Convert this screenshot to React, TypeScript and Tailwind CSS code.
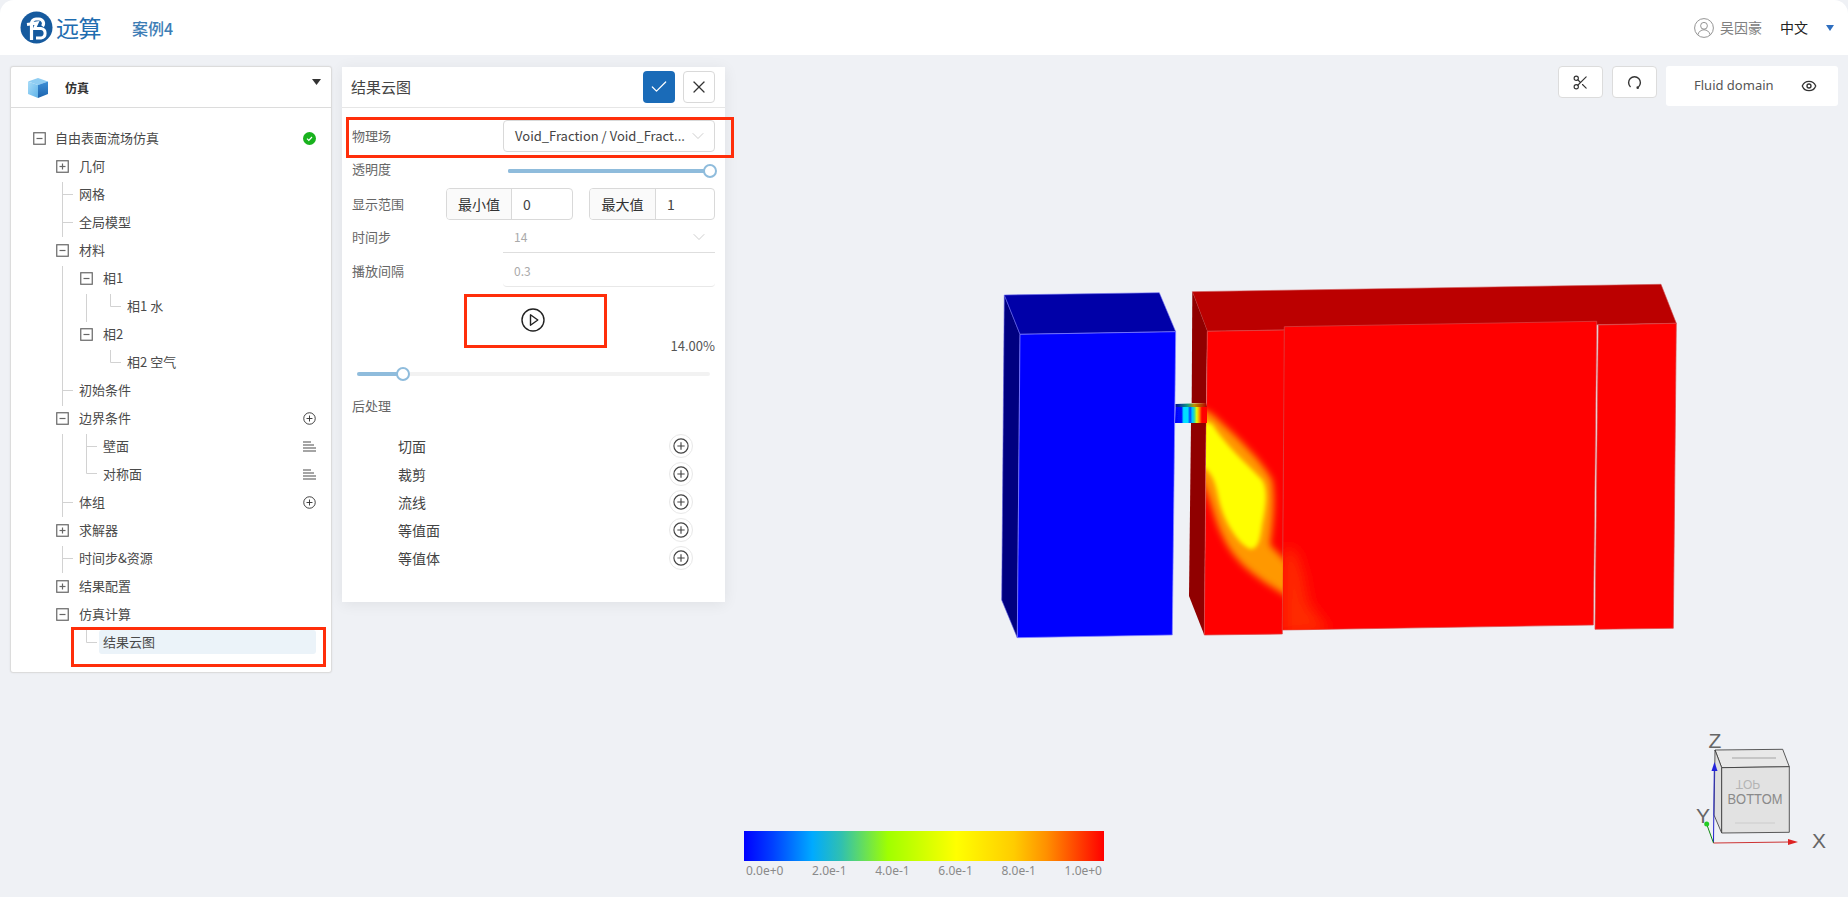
import React from "react";
import { Check, X, ChevronDown, Scissors, Eye } from "lucide-react";

const cjk = { fontFamily: '"Noto Sans CJK SC", "Noto Sans", sans-serif' };

type Row = { label: string; x: number; box?: "plus" | "minus"; right?: "add" | "list" | "ok"; selected?: boolean };

const rows: Row[] = [
  { label: "自由表面流场仿真", x: 46, box: "minus", right: "ok" },
  { label: "几何", x: 69, box: "plus" },
  { label: "网格", x: 69 },
  { label: "全局模型", x: 69 },
  { label: "材料", x: 69, box: "minus" },
  { label: "相1", x: 93, box: "minus" },
  { label: "相1 水", x: 117 },
  { label: "相2", x: 93, box: "minus" },
  { label: "相2 空气", x: 117 },
  { label: "初始条件", x: 69 },
  { label: "边界条件", x: 69, box: "minus", right: "add" },
  { label: "壁面", x: 93, right: "list" },
  { label: "对称面", x: 93, right: "list" },
  { label: "体组", x: 69, right: "add" },
  { label: "求解器", x: 69, box: "plus" },
  { label: "时间步&资源", x: 69 },
  { label: "结果配置", x: 69, box: "plus" },
  { label: "仿真计算", x: 69, box: "minus" },
  { label: "结果云图", x: 93, selected: true },
];

function TreeBox({ kind }: { kind: "plus" | "minus" }) {
  return (
    <svg width="13" height="13" viewBox="0 0 13 13" className="shrink-0">
      <rect x="0.75" y="0.75" width="11.5" height="11.5" fill="#fff" stroke="#666" strokeWidth="1.2" />
      <path d="M3.5 6.5h6" stroke="#666" strokeWidth="1.2" />
      {kind === "plus" && <path d="M6.5 3.5v6" stroke="#666" strokeWidth="1.2" />}
    </svg>
  );
}

function CirclePlus({ size = 13, color = "#333" }: { size?: number; color?: string }) {
  return (
    <svg width={size} height={size} viewBox="0 0 14 14">
      <circle cx="7" cy="7" r="6.2" fill="#fff" stroke={color} strokeWidth="1" />
      <path d="M3.8 7h6.4M7 3.8v6.4" stroke={color} strokeWidth="1" />
    </svg>
  );
}

function RightIcon({ kind }: { kind: "add" | "list" | "ok" }) {
  if (kind === "add") return <CirclePlus />;
  if (kind === "ok")
    return (
      <svg width="13" height="13" viewBox="0 0 13 13">
        <circle cx="6.5" cy="6.5" r="6.5" fill="#18b21d" />
        <path d="M4 6.7l1.8 1.8L9 5" fill="none" stroke="#fff" strokeWidth="1.2" />
      </svg>
    );
  return (
    <svg width="13" height="11" viewBox="0 0 13 11">
      <path d="M0 1h8M0 4h11M0 7h13M0 10h13" stroke="#888" strokeWidth="1.3" />
    </svg>
  );
}

function TreeRow({ row }: { row: Row }) {
  return (
    <div className="h-[28px] flex items-center relative" style={{ paddingLeft: row.box ? row.x - 23 : row.x }}>
      {row.box && (
        <div className={row.x === 46 ? "w-[22px] shrink-0 flex items-center" : "w-[23px] shrink-0 flex items-center"}>
          <TreeBox kind={row.box} />
        </div>
      )}
      {row.selected ? (
        <div className="w-[217px] h-[24px] -ml-[4px] pl-[4px] rounded-[3px] bg-[#ebf3f9] flex items-center text-[13px] text-[#4a4a4a]">
          {row.label}
        </div>
      ) : (
        <span className="text-[13px] text-[#4a4a4a] whitespace-nowrap">{row.label}</span>
      )}
      {row.right && (
        <div className="absolute right-[15px] top-0 h-full flex items-center">
          <RightIcon kind={row.right} />
        </div>
      )}
    </div>
  );
}

function Sidebar() {
  return (
    <div className="w-[322px] h-[607px] mt-[11px] shrink-0 bg-white rounded-[3px] border border-[#dcdcdc] shadow-[0_0_2px_rgba(0,0,0,0.08)] flex flex-col" style={cjk}>
      <div className="h-[41px] shrink-0 border-b border-[#dcdcdc] flex items-start pl-[16px] relative">
        <svg width="22" height="22" viewBox="0 0 22 22" className="mt-[10px]">
          <defs>
            <linearGradient id="cubeL" x1="0" y1="0" x2="1" y2="1">
              <stop offset="0" stopColor="#a8dcf8" />
              <stop offset="1" stopColor="#5fb3e8" />
            </linearGradient>
            <linearGradient id="cubeR" x1="0" y1="0" x2="0" y2="1">
              <stop offset="0" stopColor="#3d8fd6" />
              <stop offset="1" stopColor="#1d64ae" />
            </linearGradient>
          </defs>
          <path d="M11 1l10 3.5L11 8 1 4.500z" fill="#8fcdf2" />
          <path d="M1 4.500L11 8v13L1 17z" fill="url(#cubeL)" />
          <path d="M21 4.500L11 8v13l10-4z" fill="url(#cubeR)" />
        </svg>
        <span className="ml-[16px] mt-[12px] text-[12px] font-bold text-[#333]">仿真</span>
        <svg width="9" height="6" viewBox="0 0 9 6" className="absolute left-[301px] top-[12px]">
          <path d="M0 0h9L4.500 6z" fill="#333" />
        </svg>
      </div>
      <div className="relative pt-[16px] flex-1">
        <svg className="absolute left-0 top-0 pointer-events-none" width="320" height="560" viewBox="11 108 320 560">
          <path
            d="M62.500 182V237M62.500 194.500H73M62.500 222.500H73M62.500 266V406M62.500 390.500H73M86.500 294V322M110.500 294V306.500H121M110.500 350V362.500H121M62.500 434V517M62.500 502.500H73M86.500 434V473.500H97M86.500 446.500H97M62.500 546V573M62.500 558.500H73M86.500 630V642.500H97"
            fill="none"
            stroke="#d2d2d2"
            strokeWidth="1"
          />
        </svg>
        <div className="relative -ml-[1px]">
          {rows.map((r) => (
            <TreeRow key={r.label} row={r} />
          ))}
        </div>
        <div className="absolute left-[60px] top-[519px] w-[255px] h-[40px] border-[3px] border-[#ff2e0a] pointer-events-none" />
      </div>
    </div>
  );
}

function Slider({ pct, track }: { pct: number; track: string }) {
  return (
    <div className="relative h-[4px] rounded-full" style={{ background: track }}>
      <div className="h-full rounded-full bg-[#8fbcdc]" style={{ width: `${pct}%` }} />
      <div className="absolute top-[-5px] w-[14px] h-[14px] -ml-[7px] rounded-full bg-white border-2 border-[#8fbcdc]" style={{ left: `${pct}%` }} />
    </div>
  );
}

function RangeInput({ label, value, addon }: { label: string; value: string; addon: string }) {
  return (
    <div className="flex h-[32px] border border-[#d9d9d9] rounded-[4px] overflow-hidden text-[14px]">
      <div className={`${addon} shrink-0 bg-[#fafafa] border-r border-[#d9d9d9] flex items-center justify-center text-[#333]`}>{label}</div>
      <div className="flex-1 pl-[11px] flex items-center text-[#444]">{value}</div>
    </div>
  );
}

function Panel() {
  return (
    <div className="w-[383px] h-[535px] mt-[12px] shrink-0 bg-white shadow-[0_2px_14px_rgba(0,0,0,0.07)] relative text-[#666]" style={cjk}>
      <div className="h-[41px] border-b border-[#e6e6e6] flex items-center pl-[9px] pr-[10px]">
        <span className="text-[15px] text-[#444] flex-1">结果云图</span>
        <button className="w-[32px] h-[32px] rounded-[4px] bg-[#1a6bb8] flex items-center justify-center mr-[8px]">
          <Check size={20} color="#fff" strokeWidth={1.5} />
        </button>
        <button className="w-[32px] h-[32px] rounded-[4px] border border-[#d9d9d9] flex items-center justify-center">
          <X size={20} color="#333" strokeWidth={1.5} />
        </button>
      </div>

      <div className="pl-[10px] pr-[10px] text-[13px]">
        <div className="flex items-center h-[32px] mt-[12px]">
          <span className="w-[151px] shrink-0">物理场</span>
          <div className="flex-1 h-[32px] border border-[#d9d9d9] rounded-[4px] flex items-center pl-[11px] pr-[6px] text-[#444] whitespace-nowrap">
            <span className="flex-1">Void_Fraction / Void_Fract...</span>
            <ChevronDown size={20} color="#c4c4c4" strokeWidth={1} />
          </div>
        </div>
        <div className="flex items-center h-[24px] mt-[6px]">
          <span className="w-[156px] shrink-0 -mt-[2px]">透明度</span>
          <div className="flex-1 mr-[-1px] mt-[2px]">
            <Slider pct={97} track="#8fbcdc" />
          </div>
        </div>
        <div className="flex items-center h-[32px] mt-[6px]">
          <span className="w-[94px] shrink-0 -mt-[1px]">显示范围</span>
          <div className="w-[127px] shrink-0">
            <RangeInput label="最小值" value="0" addon="w-[65px]" />
          </div>
          <div className="w-[16px] shrink-0" />
          <div className="w-[126px] shrink-0">
            <RangeInput label="最大值" value="1" addon="w-[66px]" />
          </div>
        </div>
        <div className="flex items-center h-[32px] mt-[1px]">
          <span className="w-[151px] shrink-0">时间步</span>
          <div className="flex-1 h-[32px] border-b border-[#dedede] flex items-center pl-[11px] pr-[6px] text-[12px] text-[#aaa]">
            <span className="flex-1">14</span>
            <ChevronDown size={20} color="#c4c4c4" strokeWidth={1} />
          </div>
        </div>
        <div className="flex items-center h-[32px] mt-[2px]">
          <span className="w-[151px] shrink-0">播放间隔</span>
          <div className="flex-1 h-[32px] border-b border-[#e8e8e8] rounded-b-[4px] flex items-center pl-[11px] text-[12px] text-[#aaa]">0.3</div>
        </div>
        <div className="flex justify-center mt-[21px] -translate-x-[1px]">
          <svg width="24" height="24" viewBox="0 0 24 24">
            <circle cx="12" cy="12" r="11" fill="none" stroke="#222" strokeWidth="1.4" />
            <path d="M9.500 6.800v10.400l7.300-5.200z" fill="none" stroke="#222" strokeWidth="1.400" strokeLinejoin="round" />
          </svg>
        </div>
        <div className="text-right text-[13px] text-[#555] leading-[18px] mt-[5px]">14.00%</div>
        <div className="pl-[5px] pr-[5px] mt-[17px]">
          <Slider pct={13} track="#f2f2f2" />
        </div>
        <div className="mt-[20px] leading-[20px]">后处理</div>
        <div className="mt-[16px] pl-[46px] pr-[22px] text-[14px] text-[#444]">
          {["切面", "裁剪", "流线", "等值面", "等值体"].map((t) => (
            <div key={t} className="h-[28px] flex items-center justify-between">
              <span>{t}</span>
              <div className="w-[24px] h-[24px] rounded-full border border-[#e8e8e8] flex items-center justify-center">
                <CirclePlus size={16} color="#444" />
              </div>
            </div>
          ))}
        </div>
      </div>

      <div className="absolute left-[4px] top-[50px] w-[388px] h-[41px] border-[3px] border-[#ff2e0a] pointer-events-none" />
      <div className="absolute left-[122px] top-[227px] w-[143px] h-[54px] border-[3px] border-[#ff2e0a] pointer-events-none" />
    </div>
  );
}

function Model() {
  return (
    <svg className="absolute left-0 top-0 w-full h-full" viewBox="735 55 1113 842">
      <defs>
        <clipPath id="leftRed">
          <path d="M1207.300 331.300L1285 330 1282.300 634 1204.300 635z" />
        </clipPath>
        <clipPath id="midRed">
          <path d="M1284.300 326.700L1596.700 321.300 1593.300 625 1282.300 630z" />
        </clipPath>
        <filter id="b2" x="-30%" y="-30%" width="160%" height="160%">
          <feGaussianBlur stdDeviation="2" />
        </filter>
        <filter id="b6" x="-30%" y="-30%" width="160%" height="160%">
          <feGaussianBlur stdDeviation="3.500" />
        </filter>
        <filter id="b8" x="-50%" y="-30%" width="200%" height="160%">
          <feGaussianBlur stdDeviation="7" />
        </filter>
        <filter id="b05" x="-10%" y="-10%" width="120%" height="120%">
          <feGaussianBlur stdDeviation="0.6" />
        </filter>
        <linearGradient id="chan" gradientUnits="userSpaceOnUse" x1="1175" y1="0" x2="1207" y2="0">
          <stop offset="0" stopColor="#0000ff" />
          <stop offset="0.2" stopColor="#0010ff" />
          <stop offset="0.27" stopColor="#00e0ff" />
          <stop offset="0.4" stopColor="#00e0ff" />
          <stop offset="0.47" stopColor="#0040ff" />
          <stop offset="0.54" stopColor="#00c8ff" />
          <stop offset="0.6" stopColor="#30d8b0" />
          <stop offset="0.68" stopColor="#e0ff00" />
          <stop offset="0.76" stopColor="#ff9000" />
          <stop offset="0.84" stopColor="#ff0000" />
        </linearGradient>
        <linearGradient id="chanTop" gradientUnits="userSpaceOnUse" x1="1175" y1="0" x2="1207" y2="0">
          <stop offset="0" stopColor="#0000a0" />
          <stop offset="0.4" stopColor="#10a080" />
          <stop offset="0.6" stopColor="#c09000" />
          <stop offset="1" stopColor="#b00000" />
        </linearGradient>
      </defs>

      {/* blue block */}
      <path d="M1004.300 295L1020 334.300 1017.300 637.700 1001.700 600z" fill="#000080" stroke="#5a5ae0" strokeWidth="0.6" />
      <path d="M1004.300 295L1159.300 292.700 1175.700 331.700 1020 334.300z" fill="#0000a8" stroke="#6a6af0" strokeWidth="0.6" />
      <path d="M1020 334.300L1175.700 331.700 1172.300 635 1017.300 637.700z" fill="#0000ff" stroke="#8a8aff" strokeWidth="0.7" />

      {/* red block */}
      <path d="M1192.300 291.700L1661 284.300 1676.300 323.300 1207.300 331.300z" fill="#bb0000" stroke="#d05050" strokeWidth="0.6" />
      <path d="M1192.300 291.700L1207.300 331.300 1206 403 1191.700 403z" fill="#900000" />
      <path d="M1191 422.700L1206 422.700 1204.300 635 1189 596z" fill="#900000" />
      <path d="M1207.300 331.300L1285 330 1282.300 634 1204.300 635z" fill="#ff0000" stroke="#d84848" strokeWidth="0.7" />
      <path d="M1598.300 325L1676.300 323.300 1673.300 628.300 1595 629.300z" fill="#ff0000" stroke="#d84848" strokeWidth="0.7" />
      <path d="M1284.300 326.700L1596.700 321.300 1593.300 625 1282.300 630z" fill="#ff0000" stroke="#d84848" strokeWidth="0.7" />

      {/* plume */}
      <g clipPath="url(#midRed)">
        <path d="M1283 547L1296 552 1303 575 1308 603 1330 632 1283 635z" fill="#ff2c00" filter="url(#b8)" />
      </g>
      <g clipPath="url(#leftRed)">
        <path d="M1195 405L1212 414C1235 435 1262 460 1272 480C1276 500 1272 530 1270 545L1290 565V598C1260 580 1235 565 1222 535C1212 515 1210 490 1195 470Z" fill="#ff9800" filter="url(#b6)" />
        <path d="M1195 418L1212 424C1225 445 1245 462 1262 480C1268 490 1266 505 1262 525C1260 540 1258 550 1250 549C1240 545 1225 525 1219 500C1215 480 1212 470 1195 462Z" fill="#ffff00" filter="url(#b2)" />
      </g>

      {/* channel */}
      <g filter="url(#b05)">
        <path d="M1175.500 407H1207V423H1175z" fill="url(#chan)" />
        <path d="M1175.500 404L1206 403 1207 407H1175.500z" fill="url(#chanTop)" />
      </g>
    </svg>
  );
}

function Gizmo() {
  return (
    <svg className="absolute right-[8px] bottom-[37px]" width="150" height="130" viewBox="1690 730 150 130">
      <path d="M1715 750L1782.700 749.300 1789.300 766.700 1721.700 767.700z" fill="#e8e8e8" stroke="#333" strokeWidth="0.8" />
      <path d="M1715 750L1721.700 767.700 1721.700 833 1714 815z" fill="#dedede" stroke="#333" strokeWidth="0.8" />
      <path d="M1721.700 767.700L1789.300 766.700 1789.300 832.300 1721.700 833z" fill="#e2e2e2" stroke="#333" strokeWidth="0.8" />
      <path d="M1732 758h44" stroke="#bbb" strokeWidth="1.500" />
      <path d="M1735 823h40" stroke="#ccc" strokeWidth="1.200" />
      <text x="1748" y="777" transform="matrix(1 0 0 -1 0 1557)" textAnchor="middle" fontSize="12" fill="#b4b4b4" fontFamily="Liberation Sans, sans-serif">TOP</text>
      <text x="1755" y="804" textAnchor="middle" fontSize="14" textLength="55" lengthAdjust="spacingAndGlyphs" fill="#8a8a8a" fontFamily="Liberation Sans, sans-serif">BOTTOM</text>
      <path d="M1713.500 843L1714.300 768" stroke="#2222cc" strokeWidth="1" />
      <path d="M1714.500 762L1711.500 771H1717.500z" fill="#2222dd" />
      <path d="M1713.500 843L1707 825" stroke="#118811" strokeWidth="1" />
      <circle cx="1706.700" cy="824" r="2.500" fill="#22cc22" />
      <path d="M1713.500 843L1790 842" stroke="#cc3333" strokeWidth="1" />
      <path d="M1798 842L1788 839V845z" fill="#dd2222" />
      <text x="1715" y="748" textAnchor="middle" fontSize="21" fill="#666" fontFamily="Liberation Sans, sans-serif">Z</text>
      <text x="1703" y="823" textAnchor="middle" fontSize="21" fill="#666" fontFamily="Liberation Sans, sans-serif">Y</text>
      <text x="1819" y="848" textAnchor="middle" fontSize="21" fill="#666" fontFamily="Liberation Sans, sans-serif">X</text>
    </svg>
  );
}

function Viewport() {
  const ticks = ["0.0e+0", "2.0e-1", "4.0e-1", "6.0e-1", "8.0e-1", "1.0e+0"];
  return (
    <div className="flex-1 relative self-stretch">
      <Model />
      <div className="relative flex justify-end items-start gap-[9px] pr-[10px] pt-[11px]">
        <button className="w-[45px] h-[32px] bg-white border border-[#dcdcdc] rounded-[4px] flex items-center justify-center">
          <Scissors size={17} color="#333" strokeWidth={1.6} />
        </button>
        <button className="w-[45px] h-[32px] bg-white border border-[#dcdcdc] rounded-[4px] flex items-center justify-center">
          <svg width="15" height="15" viewBox="0 0 14 14">
            <path d="M3.300 11.200A5.500 5.500 0 1 1 10.700 11.200" fill="none" stroke="#333" strokeWidth="1.300" />
            <circle cx="10" cy="11.800" r="1.200" fill="#333" />
          </svg>
        </button>
        <div className="w-[172px] h-[40px] bg-white rounded-[3px] flex items-center pl-[28px] pr-[21px] text-[13px] text-[#555]" style={{ fontFamily: '"Noto Sans", sans-serif' }}>
          <span className="flex-1">Fluid domain</span>
          <Eye size={16} color="#333" strokeWidth={2} />
        </div>
      </div>
      <div className="absolute left-[9px] top-[776px] w-[360px]">
        <div
          className="h-[30px]"
          style={{
            background:
              "linear-gradient(90deg,#0000ff 0%,#0040ff 8%,#00aaff 19%,#30c0b0 27%,#a0ff00 40%,#ffff00 59%,#ffcc00 75%,#ff9000 84%,#ff0000 100%)",
          }}
        />
        <div className="flex justify-between px-[2px] mt-[1px] text-[12px] leading-[18px] text-[#8a8a8a]" style={{ fontFamily: '"Noto Sans", sans-serif' }}>
          {ticks.map((t) => (
            <span key={t}>{t}</span>
          ))}
        </div>
      </div>
      <Gizmo />
    </div>
  );
}

function Header() {
  return (
    <div className="h-[55px] shrink-0 bg-white rounded-t-[14px] flex items-center pl-[20px] pr-[14px]" style={cjk}>
      <svg width="33" height="33" viewBox="0 0 33 33" className="shrink-0">
        <circle cx="16.500" cy="16.500" r="16" fill="#165a9e" />
        <path d="M11.500 29V12.500A4.500 4.500 0 0 1 16 8h3a4.500 4.500 0 0 1 3.500 7.300" fill="none" stroke="#fff" strokeWidth="3.200" />
        <path d="M7 13.500L17 12 14.500 17.500h6.500a4.800 4.800 0 0 1 0 9.500h-5" fill="none" stroke="#fff" strokeWidth="3" />
      </svg>
      <span className="ml-[3px] text-[23px] leading-none text-[#1f6db0] tracking-[-0.5px]">远算</span>
      <span className="ml-[31px] text-[16px] font-medium text-[#3d7db5]">案例4</span>
      <div className="flex-1" />
      <svg width="20" height="20" viewBox="0 0 20 20" className="shrink-0">
        <circle cx="10" cy="10" r="9.400" fill="none" stroke="#888" strokeWidth="0.9" />
        <circle cx="10" cy="7.800" r="3.400" fill="none" stroke="#888" strokeWidth="0.9" />
        <path d="M3.800 16.800c1-3.400 3.400-5 6.200-5s5.200 1.600 6.200 5" fill="none" stroke="#888" strokeWidth="0.9" />
      </svg>
      <span className="ml-[6px] text-[14px] text-[#808080]">吴因豪</span>
      <span className="ml-[18px] text-[14px] text-[#222]">中文</span>
      <svg width="8" height="6" viewBox="0 0 8 6" className="ml-[18px]">
        <path d="M0 0h8L4 6z" fill="#2f6fc0" />
      </svg>
    </div>
  );
}

export default function App() {
  return (
    <div className="w-full h-screen bg-[#eff1f5] flex flex-col overflow-hidden">
      <Header />
      <div className="flex-1 min-h-0 flex items-start gap-[10px] pl-[10px]">
        <Sidebar />
        <Panel />
        <Viewport />
      </div>
    </div>
  );
}
